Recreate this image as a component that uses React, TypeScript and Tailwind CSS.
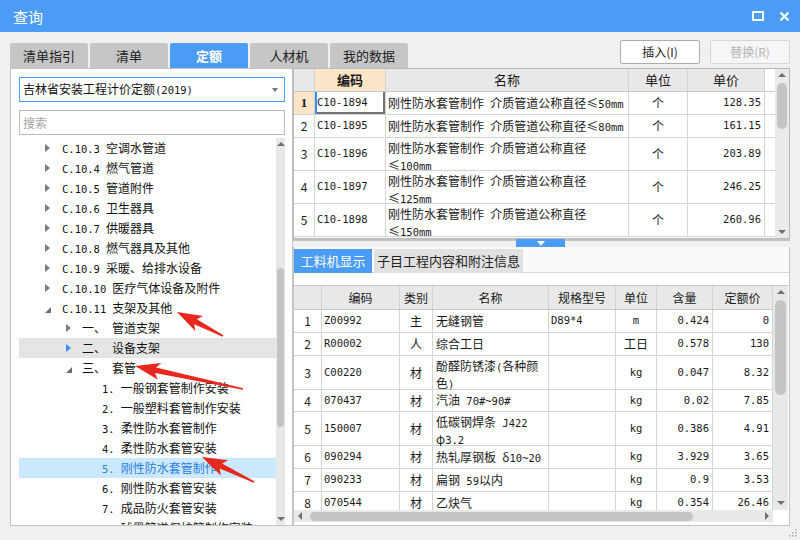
import React from "react";

const MONO = "[font-family:'DejaVu_Sans_Mono','Liberation_Mono',monospace]";

// ASCII runs get the narrow mono face, CJK keeps the base font
function Mix({ t }: { t: string }) {
  const parts = t.split(/([ -~]+)/).filter(Boolean);
  return (
    <>
      {parts.map((p, i) =>
        /^[ -~]+$/.test(p) ? (
          <span key={i} className={`${MONO} text-[10.5px] whitespace-pre`}>
            {p}
          </span>
        ) : (
          <span key={i}>{p}</span>
        )
      )}
    </>
  );
}

const TriRight = ({ blue }: { blue?: boolean }) => (
  <span
    className={`block w-0 h-0 border-y-[4px] border-y-transparent border-l-[5px] ${
      blue ? "border-l-[#3d8ff2]" : "border-l-[#7c7c7c]"
    }`}
  />
);
const TriOpen = () => (
  <span className="block w-0 h-0 border-l-[6px] border-l-transparent border-b-[6px] border-b-[#6e6e6e] mt-[3px]" />
);
const TriUp = () => (
  <span className="block w-0 h-0 border-x-[4px] border-x-transparent border-b-[4px] border-b-[#6f6f6f]" />
);
const TriDown = () => (
  <span className="block w-0 h-0 border-x-[4px] border-x-transparent border-t-[4px] border-t-[#6f6f6f]" />
);

type TreeItem = {
  lv: 1 | 2 | 3;
  a?: "r" | "d" | "b";
  c: string;
  n: string;
  hl?: "gray" | "sel";
};

const tree: TreeItem[] = [
  { lv: 1, a: "r", c: "C.10.3", n: "空调水管道" },
  { lv: 1, a: "r", c: "C.10.4", n: "燃气管道" },
  { lv: 1, a: "r", c: "C.10.5", n: "管道附件" },
  { lv: 1, a: "r", c: "C.10.6", n: "卫生器具" },
  { lv: 1, a: "r", c: "C.10.7", n: "供暖器具" },
  { lv: 1, a: "r", c: "C.10.8", n: "燃气器具及其他" },
  { lv: 1, a: "r", c: "C.10.9", n: "采暖、给排水设备" },
  { lv: 1, a: "r", c: "C.10.10", n: "医疗气体设备及附件" },
  { lv: 1, a: "d", c: "C.10.11", n: "支架及其他" },
  { lv: 2, a: "r", c: "一、", n: "管道支架" },
  { lv: 2, a: "b", c: "二、", n: "设备支架", hl: "gray" },
  { lv: 2, a: "d", c: "三、", n: "套管" },
  { lv: 3, c: "1.", n: "一般钢套管制作安装" },
  { lv: 3, c: "2.", n: "一般塑料套管制作安装" },
  { lv: 3, c: "3.", n: "柔性防水套管制作" },
  { lv: 3, c: "4.", n: "柔性防水套管安装" },
  { lv: 3, c: "5.", n: "刚性防水套管制作", hl: "sel" },
  { lv: 3, c: "6.", n: "刚性防水套管安装" },
  { lv: 3, c: "7.", n: "成品防火套管安装" },
  { lv: 3, c: "8.", n: "球墨管道保护管制作安装" },
];

function TreeRow({ r }: { r: TreeItem }) {
  const pad = r.lv === 1 ? "pl-[26px]" : r.lv === 2 ? "pl-[47px]" : "pl-[83px]";
  const box = r.lv === 1 ? "w-[17px]" : "w-[16px]";
  const bg =
    r.hl === "gray"
      ? "bg-[#e5e5e5] text-[#111]"
      : r.hl === "sel"
      ? "bg-[#cce8ff] text-[#2b7de0]"
      : "text-[#111]";
  return (
    <div className={`flex items-center h-[20px] shrink-0 text-[12px] leading-[20px] whitespace-nowrap ${pad} ${bg}`}>
      {r.a && (
        <span className={`${box} flex items-center`}>
          {r.a === "d" ? <TriOpen /> : <TriRight blue={r.a === "b"} />}
        </span>
      )}
      <span className="mr-[6px]">
        <Mix t={r.c} />
      </span>
      <span>{r.n}</span>
    </div>
  );
}

const topRows = [
  { n: "1", code: "C10-1894", name: ["刚性防水套管制作 介质管道公称直径≤50mm"], price: "128.35", tall: false },
  { n: "2", code: "C10-1895", name: ["刚性防水套管制作 介质管道公称直径≤80mm"], price: "161.15", tall: false },
  { n: "3", code: "C10-1896", name: ["刚性防水套管制作 介质管道公称直径", "≤100mm"], price: "203.89", tall: true },
  { n: "4", code: "C10-1897", name: ["刚性防水套管制作 介质管道公称直径", "≤125mm"], price: "246.25", tall: true },
  { n: "5", code: "C10-1898", name: ["刚性防水套管制作 介质管道公称直径", "≤150mm"], price: "260.96", tall: true },
];

const botRows = [
  { n: "1", code: "Z00992", t: "主", name: ["无缝钢管"], spec: "D89*4", unit: "m", q: "0.424", p: "0", h: "h-[23px]" },
  { n: "2", code: "R00002", t: "人", name: ["综合工日"], spec: "", unit: "工日", q: "0.578", p: "130", h: "h-[23px]" },
  { n: "3", code: "C00220", t: "材", name: ["酚醛防锈漆(各种颜", "色)"], spec: "", unit: "kg", q: "0.047", p: "8.32", h: "h-[34px]" },
  { n: "4", code: "070437", t: "材", name: ["汽油 70#~90#"], spec: "", unit: "kg", q: "0.02", p: "7.85", h: "h-[22px]" },
  { n: "5", code: "150007", t: "材", name: ["低碳钢焊条 J422", "φ3.2"], spec: "", unit: "kg", q: "0.386", p: "4.91", h: "h-[34px]" },
  { n: "6", code: "090294", t: "材", name: ["热轧厚钢板 δ10~20"], spec: "", unit: "kg", q: "3.929", p: "3.65", h: "h-[23px]" },
  { n: "7", code: "090233", t: "材", name: ["扁钢 59以内"], spec: "", unit: "kg", q: "0.9", p: "3.53", h: "h-[23px]" },
  { n: "8", code: "070544", t: "材", name: ["乙炔气"], spec: "", unit: "kg", q: "0.354", p: "26.46", h: "h-[23px]" },
];

const cell = "border-r border-[#d4d4d4] flex items-center shrink-0";

function arrowPts(tx: number, ty: number, sx: number, sy: number) {
  const dx = tx - sx;
  const dy = ty - sy;
  const len = Math.hypot(dx, dy);
  const ux = dx / len;
  const uy = dy / len;
  const nx = -uy;
  const ny = ux;
  const L = 21;
  const W = 8.5;
  const w1 = 2.8;
  const w0 = 0.8;
  const bx = tx - ux * L;
  const by = ty - uy * L;
  const bb = 4; // barbs swept back a little
  const pts = [
    [sx + nx * w0, sy + ny * w0],
    [bx + nx * w1, by + ny * w1],
    [bx - ux * bb + nx * W, by - uy * bb + ny * W],
    [tx, ty],
    [bx - ux * bb - nx * W, by - uy * bb - ny * W],
    [bx - nx * w1, by - ny * w1],
    [sx - nx * w0, sy - ny * w0],
  ];
  return pts.map((p) => p.map((v) => v.toFixed(1)).join(",")).join(" ");
}

const arrows = [
  [177, 312, 223, 336],
  [135, 366, 243, 389],
  [202, 457, 254, 482],
];

export default function App() {
  return (
    <div className="relative w-[800px] h-[540px] overflow-hidden bg-[#f0f0f0] flex flex-col [font-family:'Noto_Sans_CJK_SC',sans-serif] text-[#1a1a1a]">
      {/* title bar */}
      <div className="h-[32px] shrink-0 bg-[#4b9cf5] flex items-center justify-between pl-[13px] pr-[10px]">
        <span className="text-white text-[15px] leading-none">查询</span>
        <div className="flex items-center gap-[15px]">
          <svg width="12" height="10" viewBox="0 0 12 10">
            <rect x="1" y="1" width="10" height="8" fill="none" stroke="#fff" strokeWidth="2" />
          </svg>
          <svg width="11" height="11" viewBox="0 0 11 11">
            <path d="M1.5 1.5 L9.5 9.5 M9.5 1.5 L1.5 9.5" stroke="#fff" strokeWidth="2.2" />
          </svg>
        </div>
      </div>

      {/* tabs + buttons */}
      <div className="h-[36px] shrink-0 flex justify-between px-[10px]">
        <div className="flex items-end gap-[2px]">
          {["清单指引", "清单", "定额", "人材机", "我的数据"].map((t) => (
            <div
              key={t}
              className={`w-[78px] h-[25px] flex items-center justify-center text-[13px] leading-none rounded-t-[2px] ${
                t === "定额" ? "bg-[#4b9cf5] text-white font-bold" : "bg-[#c6c6c6] text-[#222]"
              }`}
            >
              {t}
            </div>
          ))}
        </div>
        <div className="flex gap-[10px] pt-[8px]">
          <div className="w-[80px] h-[24px] bg-white border border-[#adadad] rounded-[2px] flex items-center justify-center text-[12px] text-[#222]">
            插入(I)
          </div>
          <div className="w-[80px] h-[24px] bg-[#f6f6f6] border border-[#d6d6d6] rounded-[2px] flex items-center justify-center text-[12px] text-[#b4b4b4]">
            替换(R)
          </div>
        </div>
      </div>

      {/* main */}
      <div className="h-[458px] shrink-0 flex px-[10px]">
        {/* left panel */}
        <div className="w-[283px] h-full bg-white border border-[#c3c3c3] flex flex-col pl-[8px] pr-[7px] pt-[8px]">
          <div className="h-[25px] shrink-0 border border-[#4b9cf5] flex items-center justify-between pl-[3px] pr-[6px] text-[12px] text-[#111]">
            <span>
              吉林省安装工程计价定额<Mix t="(2019)" />
            </span>
            <span className="block w-0 h-0 border-x-[3px] border-x-transparent border-t-[4px] border-t-[#777]" />
          </div>
          <div className="mt-[8px] h-[25px] shrink-0 border border-[#bababa] flex items-center pl-[3px] text-[12px] text-[#a5a5a5]">
            搜索
          </div>
          <div className="mt-[3px] flex-1 min-h-0 flex">
            <div className="w-[257px] h-full overflow-hidden flex flex-col">
              {tree.map((r, i) => (
                <TreeRow key={i} r={r} />
              ))}
            </div>
            <div className="w-[9px] h-full bg-[#e8e8e8] flex flex-col items-center">
              <div className="h-[12px] shrink-0 flex items-center">
                <TriUp />
              </div>
              <div className="h-[118px] shrink-0" />
              <div className="h-[159px] w-[7px] shrink-0 rounded-full bg-[#c4c4c4]" />
              <div className="flex-1" />
              <div className="h-[12px] shrink-0 flex items-center">
                <TriDown />
              </div>
            </div>
          </div>
        </div>

        {/* right panel */}
        <div className="w-[497px] h-full flex flex-col">
          {/* top table */}
          <div className="h-[171px] shrink-0 border border-[#b8b8b8] flex bg-white">
            <div className="w-[481px] flex flex-col text-[12px]">
              <div className="h-[23px] shrink-0 flex border-b border-[#c8c8c8] text-[13px]">
                <div className={`${cell} w-[21px] bg-[#e8e8e8]`} />
                <div className={`${cell} w-[71px] bg-[#fde6c8] justify-center font-bold`}>编码</div>
                <div className={`${cell} w-[243px] bg-[#e8e8e8] justify-center`}>名称</div>
                <div className={`${cell} w-[59px] bg-[#e8e8e8] justify-center`}>单位</div>
                <div className={`${cell} w-[77px] bg-[#e8e8e8] justify-center`}>单价</div>
              </div>
              {topRows.map((r) => (
                <div
                  key={r.n}
                  className={`${r.tall ? "h-[33px]" : "h-[23px]"} shrink-0 flex border-b border-[#d4d4d4]`}
                >
                  <div
                    className={`${cell} w-[21px] justify-center ${
                      r.n === "1" ? "bg-[#fde6c8] font-bold [font-family:'Liberation_Serif',serif] text-[13px]" : ""
                    }`}
                  >
                    {r.n}
                  </div>
                  <div
                    className={`${cell} w-[71px] pl-[2px] ${
                      r.n === "1" ? "shadow-[inset_2px_0_0_#3b8ef0,inset_-2px_-2px_0_#737373]" : ""
                    }`}
                  >
                    <Mix t={r.code} />
                  </div>
                  <div
                    className={`${cell} w-[243px] pl-[2px] whitespace-nowrap ${
                      r.tall ? "flex-col !items-start pt-[2px] leading-[15px]" : ""
                    }`}
                  >
                    {r.name.map((l, i) => (
                      <div key={i}>
                        <Mix t={l} />
                      </div>
                    ))}
                  </div>
                  <div className={`${cell} w-[59px] justify-center`}>个</div>
                  <div className={`${cell} w-[77px] justify-end pr-[3px]`}>
                    <Mix t={r.price} />
                  </div>
                </div>
              ))}
            </div>
            <div className="flex-1" />
            <div className="w-[14px] bg-[#eaeaea] flex flex-col items-center">
              <div className="h-[12px] shrink-0 flex items-center">
                <TriUp />
              </div>
              <div className="h-[2px] shrink-0" />
              <div className="h-[46px] w-[10px] shrink-0 rounded-full bg-[#c4c4c4]" />
              <div className="flex-1" />
              <div className="h-[12px] shrink-0 flex items-center">
                <TriDown />
              </div>
            </div>
          </div>

          {/* splitter */}
          <div className="h-[8px] shrink-0 flex">
            <div className="w-[223px] border-t-2 border-[#c2c2c2]" />
            <div className="w-[49px] bg-[#4b9cf5] flex items-center justify-center">
              <span className="block w-0 h-0 border-x-[4px] border-x-transparent border-t-[5px] border-t-white" />
            </div>
            <div className="flex-1 border-t-2 border-[#c2c2c2]" />
          </div>

          {/* bottom section */}
          <div className="flex-1 min-h-0 border-x border-b border-[#c4c4c4] bg-white flex flex-col">
            <div className="h-[26px] shrink-0 pt-[2px] flex gap-[2px] border-b border-[#d6d6d6] bg-[#fafafa]">
              <div className="w-[78px] h-[24px] bg-[#4b9cf5] text-white text-[13px] flex items-center justify-center">
                工料机显示
              </div>
              <div className="w-[149px] h-[24px] bg-[#e1e1e1] text-[#222] text-[13px] flex items-center justify-center">
                子目工程内容和附注信息
              </div>
            </div>
            <div className="h-[12px] shrink-0" />
            <div className="flex-1 min-h-0 flex flex-col border-t border-[#c8c8c8]">
              <div className="h-[224px] shrink-0 flex">
                <div className="w-[479px] h-full overflow-hidden flex flex-col text-[12px]">
                  <div className="h-[24px] shrink-0 flex border-b border-[#c8c8c8] bg-[#e8e8e8]">
                    <div className={`${cell} w-[28px]`} />
                    <div className={`${cell} w-[78px] justify-center`}>编码</div>
                    <div className={`${cell} w-[33px] justify-center`}>类别</div>
                    <div className={`${cell} w-[116px] justify-center`}>名称</div>
                    <div className={`${cell} w-[67px] justify-center`}>规格型号</div>
                    <div className={`${cell} w-[41px] justify-center`}>单位</div>
                    <div className={`${cell} w-[56px] justify-center`}>含量</div>
                    <div className={`${cell} w-[60px] justify-center`}>定额价</div>
                  </div>
                  {botRows.map((r) => (
                    <div key={r.n} className={`${r.h} shrink-0 flex border-b border-[#d4d4d4]`}>
                      <div className={`${cell} w-[28px] justify-center`}>{r.n}</div>
                      <div className={`${cell} w-[78px] pl-[2px]`}>
                        <Mix t={r.code} />
                      </div>
                      <div className={`${cell} w-[33px] justify-center`}>{r.t}</div>
                      <div
                        className={`${cell} w-[116px] pl-[3px] whitespace-nowrap ${
                          r.name.length > 1 ? "flex-col !items-start pt-[2px] leading-[15px]" : ""
                        }`}
                      >
                        {r.name.map((l, i) => (
                          <div key={i}>
                            <Mix t={l} />
                          </div>
                        ))}
                      </div>
                      <div className={`${cell} w-[67px] pl-[2px]`}>
                        <Mix t={r.spec} />
                      </div>
                      <div className={`${cell} w-[41px] justify-center`}>
                        <Mix t={r.unit} />
                      </div>
                      <div className={`${cell} w-[56px] justify-end pr-[3px]`}>
                        <Mix t={r.q} />
                      </div>
                      <div className={`${cell} w-[60px] justify-end pr-[3px]`}>
                        <Mix t={r.p} />
                      </div>
                    </div>
                  ))}
                </div>
                <div className="w-[15px] h-full bg-[#e8e8e8] flex flex-col items-center">
                  <div className="h-[12px] shrink-0 flex items-center">
                    <TriUp />
                  </div>
                  <div className="h-[2px] shrink-0" />
                  <div className="h-[95px] w-[11px] shrink-0 rounded-full bg-[#c4c4c4]" />
                  <div className="flex-1" />
                  <div className="h-[14px] shrink-0 flex items-center">
                    <TriDown />
                  </div>
                </div>
              </div>
              <div className="h-[12px] shrink-0 flex">
                <div className="w-[479px] h-full bg-[#e8e8e8] flex items-center">
                  <div className="w-[12px] h-full flex items-center justify-center">
                    <span className="block w-0 h-0 border-y-[4px] border-y-transparent border-r-[4px] border-r-[#6f6f6f]" />
                  </div>
                  <div className="w-[4px]" />
                  <div className="w-[383px] h-[9px] rounded-full bg-[#c4c4c4]" />
                  <div className="flex-1" />
                  <div className="w-[12px] h-full flex items-center justify-center">
                    <span className="block w-0 h-0 border-y-[4px] border-y-transparent border-l-[4px] border-l-[#6f6f6f]" />
                  </div>
                </div>
                <div className="flex-1 bg-white" />
              </div>
            </div>
          </div>
        </div>
      </div>

      {/* resize grip */}
      <svg className="absolute right-[3px] bottom-[3px]" width="9" height="9" viewBox="0 0 9 9">
        <g fill="#a8a8a8">
          <rect x="7" y="1" width="1.5" height="1.5" />
          <rect x="4" y="4" width="1.5" height="1.5" />
          <rect x="7" y="4" width="1.5" height="1.5" />
          <rect x="1" y="7" width="1.5" height="1.5" />
          <rect x="4" y="7" width="1.5" height="1.5" />
          <rect x="7" y="7" width="1.5" height="1.5" />
        </g>
      </svg>

      {/* red annotation arrows */}
      <svg className="absolute inset-0 pointer-events-none" width="800" height="540" viewBox="0 0 800 540">
        {arrows.map((a, i) => (
          <polygon key={i} points={arrowPts(a[0], a[1], a[2], a[3])} fill="#e8281e" />
        ))}
      </svg>
    </div>
  );
}
